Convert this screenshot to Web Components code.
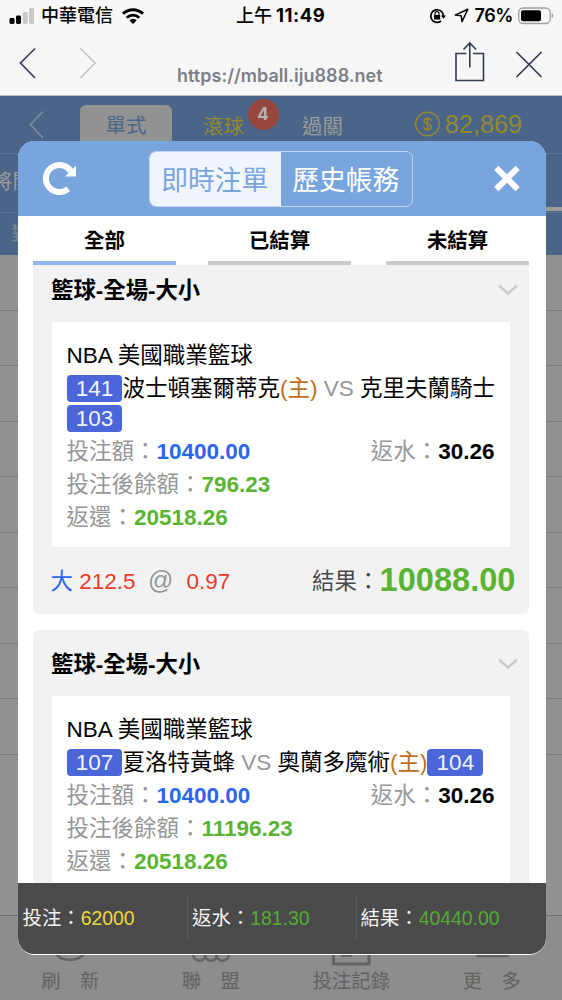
<!DOCTYPE html>
<html lang="zh-Hant">
<head>
<meta charset="utf-8">
<title>即時注單</title>
<style>
body{margin:0;width:562px;height:1000px;overflow:hidden;background:#f7f7f8;color:#000;
font-family:"Liberation Sans","Noto Sans CJK TC",sans-serif;font-size:22.5px;position:relative}
</style>
</head>
<body>
<app-screen></app-screen>
<script>
const define = (name, html, setup) => {
  const t = document.createElement('template');
  t.innerHTML = html;
  customElements.define(name, class extends HTMLElement {
    constructor() {
      super();
      this.attachShadow({ mode: 'open' }).appendChild(t.content.cloneNode(true));
    }
    connectedCallback() { if (setup) setup(this, this.shadowRoot); }
  });
};

define('status-bar', `
<style>
:host{display:grid;grid-template-columns:236px 1fr auto;align-items:center;height:30px;box-sizing:border-box;padding-right:8px;
font:500 18px/31px Inter,"Noto Sans CJK TC",sans-serif;white-space:nowrap}
div{display:flex;align-items:center}
.l{padding-left:9px}.l span{margin:0 9px 0 7px}
.c b{font-weight:700;margin-left:4px;font-size:18.500px;letter-spacing:.55px}
.r span{margin:0 5px 0 6px;letter-spacing:-.4px;font-weight:600}
svg{display:block}
</style>
<div class="l"><svg width="25" height="16" viewBox="0 0 25 16"><rect x="0.5" y="10" width="5" height="6" rx="1.4"/><rect x="7" y="7.500" width="5" height="8.500" rx="1.400"/><rect x="13.700" y="4" width="5" height="12" rx="1.400" fill="#c9c9ca"/><rect x="20" y="0" width="5" height="16" rx="1.400" fill="#c9c9ca"/></svg>
<span>中華電信</span>
<svg width="22" height="16" viewBox="0 0 22 16"><g fill="none" stroke="#000" stroke-width="2.900"><path d="M1 5.800a14.200 14.200 0 0 1 20 0"/><path d="M4.800 9.700a8.800 8.800 0 0 1 12.400 0"/></g><path d="M11 16l-3.700-3.800a5.200 5.200 0 0 1 7.400 0z"/></svg></div>
<div class="c">上午<b>11:49</b></div>
<div class="r"><svg width="17" height="16" viewBox="0 0 17 16"><g fill="none" stroke="#000" stroke-width="1.700"><path d="M14.400 8A6.300 6.300 0 1 0 12 13"/><path d="M6 7.500V5.700a2 2 0 0 1 4 0V7.500" stroke-width="1.200"/></g><rect x="5" y="7" width="6.200" height="4.500" rx=".6"/><path d="M12 7.500h5l-2.500 3.200z"/></svg>
<svg width="15" height="15" viewBox="0 0 15 15" style="margin-left:8px"><path d="M13.800 1.200L1.300 7.100 7.200 7.800 8 13.600z" fill="none" stroke="#000" stroke-width="1.500" stroke-linejoin="round"/></svg>
<span>76%</span>
<svg width="36" height="18" viewBox="0 0 36 18"><rect x=".7" y="1" width="31.500" height="15.500" rx="4.500" fill="none" stroke="#a0a0a1" stroke-width="1.300"/><rect x="3" y="3.200" width="20" height="11" rx="2"/><path d="M33.700 6.300c2 .6 2 4.300 0 5z" fill="#a0a0a1"/></svg></div>`);

define('browser-bar', `
<style>
:host{display:grid;grid-template-columns:177px 1fr 50px 50px;height:66px;box-sizing:border-box;padding-right:12px;color:#7c7f88;
font:600 18px/24px Inter,sans-serif;border-bottom:1px solid #b9bdc4}
svg{display:block;fill:none}
.u{padding-top:34px;letter-spacing:.02px;white-space:nowrap}
</style>
<svg width="177" height="64"><path d="M35 18.500L20.500 33 35 48" stroke="#3a4156" stroke-width="1.700"/><path d="M80.500 18.500L95 33 80.500 48" stroke="#c3c5ca" stroke-width="1.700"/></svg>
<div class="u">https://mball.iju888.net</div>
<svg width="50" height="64" viewBox="450 30 50 64" stroke="#333b55" stroke-width="1.600"><path d="M466.500 53.500H456v27h27.500v-27H473M469.800 67.500V43.500M463.500 49.500l6.300-6.500 6.300 6.500"/></svg>
<svg width="50" height="64" viewBox="500 30 50 64" stroke="#333b55" stroke-width="1.700"><path d="M516.500 52l25 25M541.500 52l-25 25"/></svg>`);

define('nav-item', `
<style>:host{display:block;text-align:center;font-size:19.400px;line-height:28px;color:#626262}
svg{display:block;margin:0 auto;height:27px;fill:none;stroke:#626262;stroke-width:2.500}div{white-space:pre}</style>
<svg width="44" height="27" viewBox="0 0 44 27"></svg><div><slot></slot></div>`, (el, r) => {
  r.querySelector('svg').innerHTML = {
    refresh: '<circle cx="22" cy="0" r="20"/>',
    league: '<circle cx="10.500" cy="14.500" r="6.300"/><circle cx="22" cy="14.500" r="6.300"/><circle cx="33.500" cy="14.500" r="6.300"/>',
    record: '<path d="M4.500 0V24H40V0" stroke-width="3"/><path d="M12 15.500h11"/>',
    more: '<rect x="7" y="2" width="31" height="14" rx="2" fill="#626262"/>'
  }[el.getAttribute('icon')];
});

define('game-page', `
<style>
:host{display:grid;grid-template-rows:57px 59px 43px 1fr 85px;height:904px;background:#929292;overflow:hidden}
.top{background:#4a6587;display:grid;grid-template-columns:80px 92px 92px auto 1fr;position:relative;font-size:20.400px;line-height:40px;color:#9b9b9b;align-items:start}
.top svg{display:block}
.tab{background:#929292;color:#4a6587;border-radius:6px 6px 0 0;text-align:center;margin-top:9px;height:48px;line-height:43px}
.live{color:#938a2d;padding:11px 0 0 31px}
.dot{position:absolute;left:247.500px;top:3px;width:31px;height:31px;border-radius:50%;background:#96463f;color:#b5b2b2;font:700 17px/31px Inter,sans-serif;text-align:center}
.p{padding:11px 0 0 38px}
.m{display:flex;align-items:center;gap:5px;padding:8px 0 0 72px;color:#938a2d;font-size:25.300px}
.sub{background:#4a6587;border-top:1px solid #5b7593;line-height:57px;font-size:20.400px;color:#9c9c9c;overflow:hidden;display:flex;justify-content:space-between;white-space:nowrap}
.sub span{margin-left:-8px;width:60px}
.sub i{align-self:end;width:20px;height:4px;background:#9b9b9b;margin-bottom:1px}
.th{background:#4a6587;border-top:1px solid #5b7593;line-height:42px;font-size:20.400px;color:#7c8995;padding-left:11px}
.rows{overflow:hidden}
.rows div{height:54.500px;border-bottom:1px solid #7c7c7c}
nav{display:grid;grid-template-columns:repeat(4,140.500px);border-top:1px solid #6c6c6c;background:#8d8d8d;padding-top:24px;box-sizing:border-box}
</style>
<div class="top"><svg width="80" height="57"><path d="M43 15.500L30.500 28.500 43 42" fill="none" stroke="#7f8d9e" stroke-width="1.500"/></svg>
<div class="tab">單式</div><div class="live">滾球</div><div class="p">過關</div>
<div class="m"><svg width="25" height="26" viewBox="0 0 25 26" fill="none" stroke="#938a2d" stroke-width="1.500"><circle cx="12.500" cy="13" r="11.800"/><path d="M16.200 9.800c-.3-1.500-1.700-2.200-3.600-2.200-2 0-3.600.9-3.600 2.500 0 3.700 7.400 1.900 7.400 5.700 0 1.700-1.700 2.700-3.800 2.700-2.200 0-3.800-1-4-2.900M12.500 5.500v15"/></svg>82,869</div>
<div class="dot">4</div></div>
<div class="sub"><span>將開</span><i></i></div>
<div class="th">對</div>
<div class="rows"><div></div><div></div><div></div><div></div><div></div><div></div><div></div><div></div><div></div></div>
<nav><nav-item icon="refresh">刷&emsp;新</nav-item><nav-item icon="league">聯&emsp;盟</nav-item><nav-item icon="record">投注記錄</nav-item><nav-item icon="more">更&emsp;多</nav-item></nav>`);

define('modal-header', `
<style>
:host{display:grid;grid-template-columns:131px 264px 1fr;height:75px;background:#79a5df;align-items:center}
svg{display:block}
.seg{display:grid;grid-template-columns:1fr 1fr;height:56px;box-sizing:border-box;border:1.500px solid #bfd5f2;border-radius:7px;overflow:hidden;
font-size:26.800px;line-height:59px;text-align:center;color:#fff;margin-top:1px}
.seg div{padding-right:1.500px}
.on{background:#f1f5fd;color:#79a5df}
</style>
<svg width="131" height="75" viewBox="18 141 131 75"><path d="M68.200 188.800A13.500 13.500 0 1 1 70.600 171" fill="none" stroke="#fff" stroke-width="6"/><path d="M76 165.500V176.500H65z" fill="#fff"/></svg>
<div class="seg"><div class="on">即時注單</div><div>歷史帳務</div></div>
<svg width="133" height="75" viewBox="413 141 133 75"><path d="M496.300 167.800l21.400 21.400M517.700 167.800l-21.400 21.400" stroke="#fff" stroke-width="6"/></svg>`);

define('filter-tabs', `
<style>
:host{display:grid;grid-template-columns:175px 178px 143px;height:49px;padding:0 17px 0 15px;background:#fff;position:relative;z-index:1;
font-size:20.400px;font-weight:700;line-height:50px;text-align:center}
div{border-bottom:4px solid #c9c9c9;height:45px;width:143px}
.on{border-color:#93b7ea}
</style>
<div class="on">全部</div><div>已結算</div><div>未結算</div>`);

define('game-no', `
<style>:host{display:inline-block;box-sizing:border-box;width:55.900px;height:27px;line-height:27px;border-radius:4px;background:#4a66d8;color:#f2f4ff;text-align:center;vertical-align:middle;position:relative;top:-2px}</style><slot></slot>`);

define('bet-field', `
<style>:host{display:inline-block;color:#969696;white-space:nowrap}b{color:var(--v,#5ab434)}</style><span></span><b><slot></slot></b>`, (el, r) => {
  r.querySelector('span').textContent = el.getAttribute('label') + '：';
});

define('bet-card', `
<style>
:host{display:block;height:358px;background:#f2f2f2;border-radius:6px;margin-bottom:16px;line-height:33px}
header{display:flex;justify-content:space-between;align-items:center;height:66px;padding:2px 11px 0 18px;box-sizing:border-box;font-weight:700;font-size:22.400px}
svg{display:block;margin-top:-2px}
section{background:#fff;margin:0 19px 0 18.500px;padding:17px 15.500px 13px 15px}
.m{line-height:30px;padding:2px 0 1px;margin-right:-4px}
footer{display:flex;justify-content:space-between;align-items:baseline;padding:13px 13.500px 0 17.500px;line-height:36px;color:#4a4a4a}
</style>
<header><slot name="title"></slot><svg width="20" height="11" viewBox="0 0 20 11"><path d="M1 1.500l9 8 9-8" fill="none" stroke="#cbcbcb" stroke-width="2.400"/></svg></header>
<section><div><slot name="league"></slot></div><div class="m"><slot name="match"></slot></div><slot></slot></section>
<footer><slot name="pick"></slot><slot name="result"></slot></footer>`);

define('summary-bar', `
<style>
:host{display:grid;grid-template-columns:169.500px 169px 1fr;height:71px;background:#4a4a4a;color:#f5f5f5;font-size:19.400px;line-height:43px;align-items:center;border-radius:0 0 16px 16px}
div{padding-left:4.500px;border-right:1.500px solid #5c5c5c;white-space:nowrap}div:last-child{border:0;padding-left:4px}
span{color:#52ad33}.y{color:#eed63c}
</style>
<div>投注：<span class="y">62000</span></div><div>返水：<span>181.30</span></div><div>結果：<span>40440.00</span></div>`);

define('bet-modal', `
<style>
:host{display:flex;flex-direction:column;position:absolute;left:18px;top:141px;width:528px;height:814px;border-radius:17px;overflow:hidden;background:#fff}
main{overflow:hidden;padding:0 17px 0 15px;margin-top:-9px;height:627px}
.f{display:flex;justify-content:space-between}
.h{color:#c06f1c}.g{color:#969696}.n{white-space:nowrap}.r{color:#eb3a2c}.bl{color:#2c66f0}
.at{font-size:25px;line-height:20px;margin:0 13px 0 12.400px}
.res{font-size:32.600px;color:#5ab434;position:relative;top:2px}
[slot=result]{white-space:nowrap}
</style>
<modal-header></modal-header><filter-tabs></filter-tabs>
<main>
<bet-card><span slot="title">籃球-全場-大小</span><span slot="league">NBA 美國職業籃球</span>
<span slot="match"><game-no>141</game-no>波士頓塞爾蒂克<span class="h">(主)</span> <span class="g">VS</span> <span class="n">克里夫蘭騎士</span><game-no>103</game-no></span>
<div class="f"><bet-field label="投注額" style="--v:#2c66f0">10400.00</bet-field><bet-field label="返水" style="--v:#000">30.26</bet-field></div>
<div><bet-field label="投注後餘額">796.23</bet-field></div><div><bet-field label="返還">20518.26</bet-field></div>
<span slot="pick"><span class="bl">大</span> <span class="r">212.5</span><span class="g at">@</span><span class="r">0.97</span></span>
<span slot="result">結果：<b class="res">10088.00</b></span></bet-card>
<bet-card><span slot="title">籃球-全場-大小</span><span slot="league">NBA 美國職業籃球</span>
<span slot="match"><game-no>107</game-no>夏洛特黃蜂 <span class="g">VS</span> 奧蘭多魔術<span class="h">(主)</span><game-no>104</game-no></span>
<div class="f"><bet-field label="投注額" style="--v:#2c66f0">10400.00</bet-field><bet-field label="返水" style="--v:#000">30.26</bet-field></div>
<div><bet-field label="投注後餘額">11196.23</bet-field></div><div><bet-field label="返還">20518.26</bet-field></div></bet-card>
</main>
<summary-bar></summary-bar>`);

define('app-screen', `<style>:host{display:block}</style><status-bar></status-bar><browser-bar></browser-bar><game-page></game-page><bet-modal></bet-modal>`);
</script>
</body>
</html>
